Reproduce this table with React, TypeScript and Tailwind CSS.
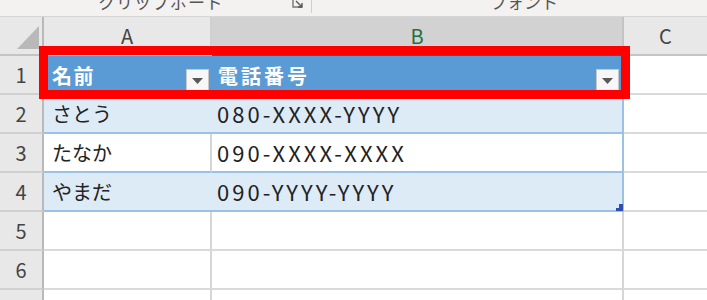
import React from "react";

const font = { fontFamily: '"Noto Sans CJK JP", "Noto Sans", sans-serif' };

type Row = { no: number; name: string; tel: string };

const rows: Row[] = [
  { no: 2, name: "さとう", tel: "080-XXXX-YYYY" },
  { no: 3, name: "たなか", tel: "090-XXXX-XXXX" },
  { no: 4, name: "やまだ", tel: "090-YYYY-YYYY" },
];

function FilterButton() {
  return (
    <span className="absolute right-[3px] bottom-[3px] flex h-[23px] w-[23px] items-center justify-center border border-[#c8c8c8] bg-[#f7f7f7]">
      <svg width="11" height="6" viewBox="0 0 11 6">
        <path d="M0 0h11L5.5 6z" fill="#595959" />
      </svg>
    </span>
  );
}

function RowHead({ n }: { n: number | string }) {
  return (
    <div className="flex items-center justify-center border-r-2 border-b-2 border-r-[#b9b9b9] border-b-[#d0d0d0] bg-[#e8e8e8] text-[20px] text-[#444]">
      {n}
    </div>
  );
}

export default function App() {
  return (
    <div className="h-[300px] w-[707px] overflow-hidden bg-white" style={font}>
      {/* ribbon group labels, cut at the top */}
      <div className="relative h-[17px] border-b border-[#d5d5d5] bg-[#f3f2f1] text-[17px] text-[#555]">
        <span className="absolute left-[98px] top-[-11px] tracking-[1px]">クリップボード</span>
        <span className="absolute left-[292px] top-[-2px]">
          <svg width="14" height="12" viewBox="0 0 14 12">
            <path d="M1 0v9h9" fill="none" stroke="#777" strokeWidth="1.4" />
            <path d="M4 3l6 6M10 5v4H6" fill="none" stroke="#555" strokeWidth="1.4" />
          </svg>
        </span>
        <span className="absolute left-[311px] top-0 h-[13px] w-px bg-[#cfcfcf]" />
        <span className="absolute left-[490px] top-[-11px]">フォント</span>
      </div>

      <div className="relative grid grid-cols-[44px_168px_412px_1fr] grid-rows-[39px_39px_39px_39px_39px_39px_39px_39px]">
        {/* column headers */}
        <div className="relative border-r-2 border-b-2 border-r-[#b9b9b9] border-b-[#c4c4c4] bg-[#e8e8e8]">
          <svg className="absolute left-[17px] top-[9px]" width="22" height="23" viewBox="0 0 22 23">
            <path d="M22 0v23H0z" fill="#b9b9b9" />
          </svg>
        </div>
        <div className="flex items-center justify-center border-r-2 border-b-2 border-r-[#d0d0d0] border-b-[#c4c4c4] bg-[#e8e8e8] text-[20px] text-[#444]">
          A
        </div>
        <div className="flex items-center justify-center border-r-2 border-b-2 border-r-[#c4c4c4] border-b-[#217346] bg-[#d2d2d2] text-[20px] text-[#1e7145]">
          B
        </div>
        <div className="flex items-center justify-center border-b-2 border-b-[#c4c4c4] bg-[#e8e8e8] text-[20px] text-[#444]">
          C
        </div>

        {/* row 1: table header */}
        <RowHead n={1} />
        <div className="relative flex items-center bg-[#5b9bd5] pl-[8px] text-[20px] font-bold tracking-[1.5px] text-white">
          名前
          <FilterButton />
        </div>
        <div className="relative flex items-center border-r-2 border-r-[#9bc2e6] bg-[#5b9bd5] pl-[6px] text-[20px] font-bold tracking-[3px] text-white">
          電話番号
          <FilterButton />
        </div>
        <div className="border-b-2 border-b-[#dadada]" />

        {rows.map((r) => {
          const band = r.no % 2 === 0;
          return (
            <React.Fragment key={r.no}>
              <RowHead n={r.no} />
              <div
                className={`flex items-center border-b-2 border-b-[#9bc2e6] pl-[8px] text-[20px] text-[#222] ${
                  band ? "bg-[#ddebf7]" : "border-r-2 border-r-[#d6d6d6] bg-white"
                }`}
              >
                {r.name}
              </div>
              <div
                className={`relative flex items-center border-r-2 border-b-2 border-r-[#9bc2e6] border-b-[#9bc2e6] pl-[5px] text-[22px] tracking-[3px] text-[#222] ${
                  band ? "bg-[#ddebf7]" : "bg-white"
                }`}
              >
                {r.tel}
                {r.no === 4 && (
                  <svg className="absolute right-[-1px] bottom-[-1px]" width="7" height="7" viewBox="0 0 7 7">
                    <path d="M7 0v7H0V4h3V0z" fill="#2f4fb0" />
                  </svg>
                )}
              </div>
              <div className="border-b-2 border-b-[#dadada]" />
            </React.Fragment>
          );
        })}

        {[5, 6, 7, 8].map((n) => (
          <React.Fragment key={n}>
            <RowHead n={n} />
            <div className="border-r-2 border-b-2 border-r-[#d6d6d6] border-b-[#dadada]" />
            <div className="border-r-2 border-b-2 border-r-[#d6d6d6] border-b-[#dadada]" />
            <div className="border-b-2 border-b-[#dadada]" />
          </React.Fragment>
        ))}

        {/* red highlight frame over the table header row */}
        <div className="pointer-events-none absolute left-[39px] top-[29px] h-[53px] w-[591px] border-[9px] border-[#ff0000]" />
      </div>
    </div>
  );
}
